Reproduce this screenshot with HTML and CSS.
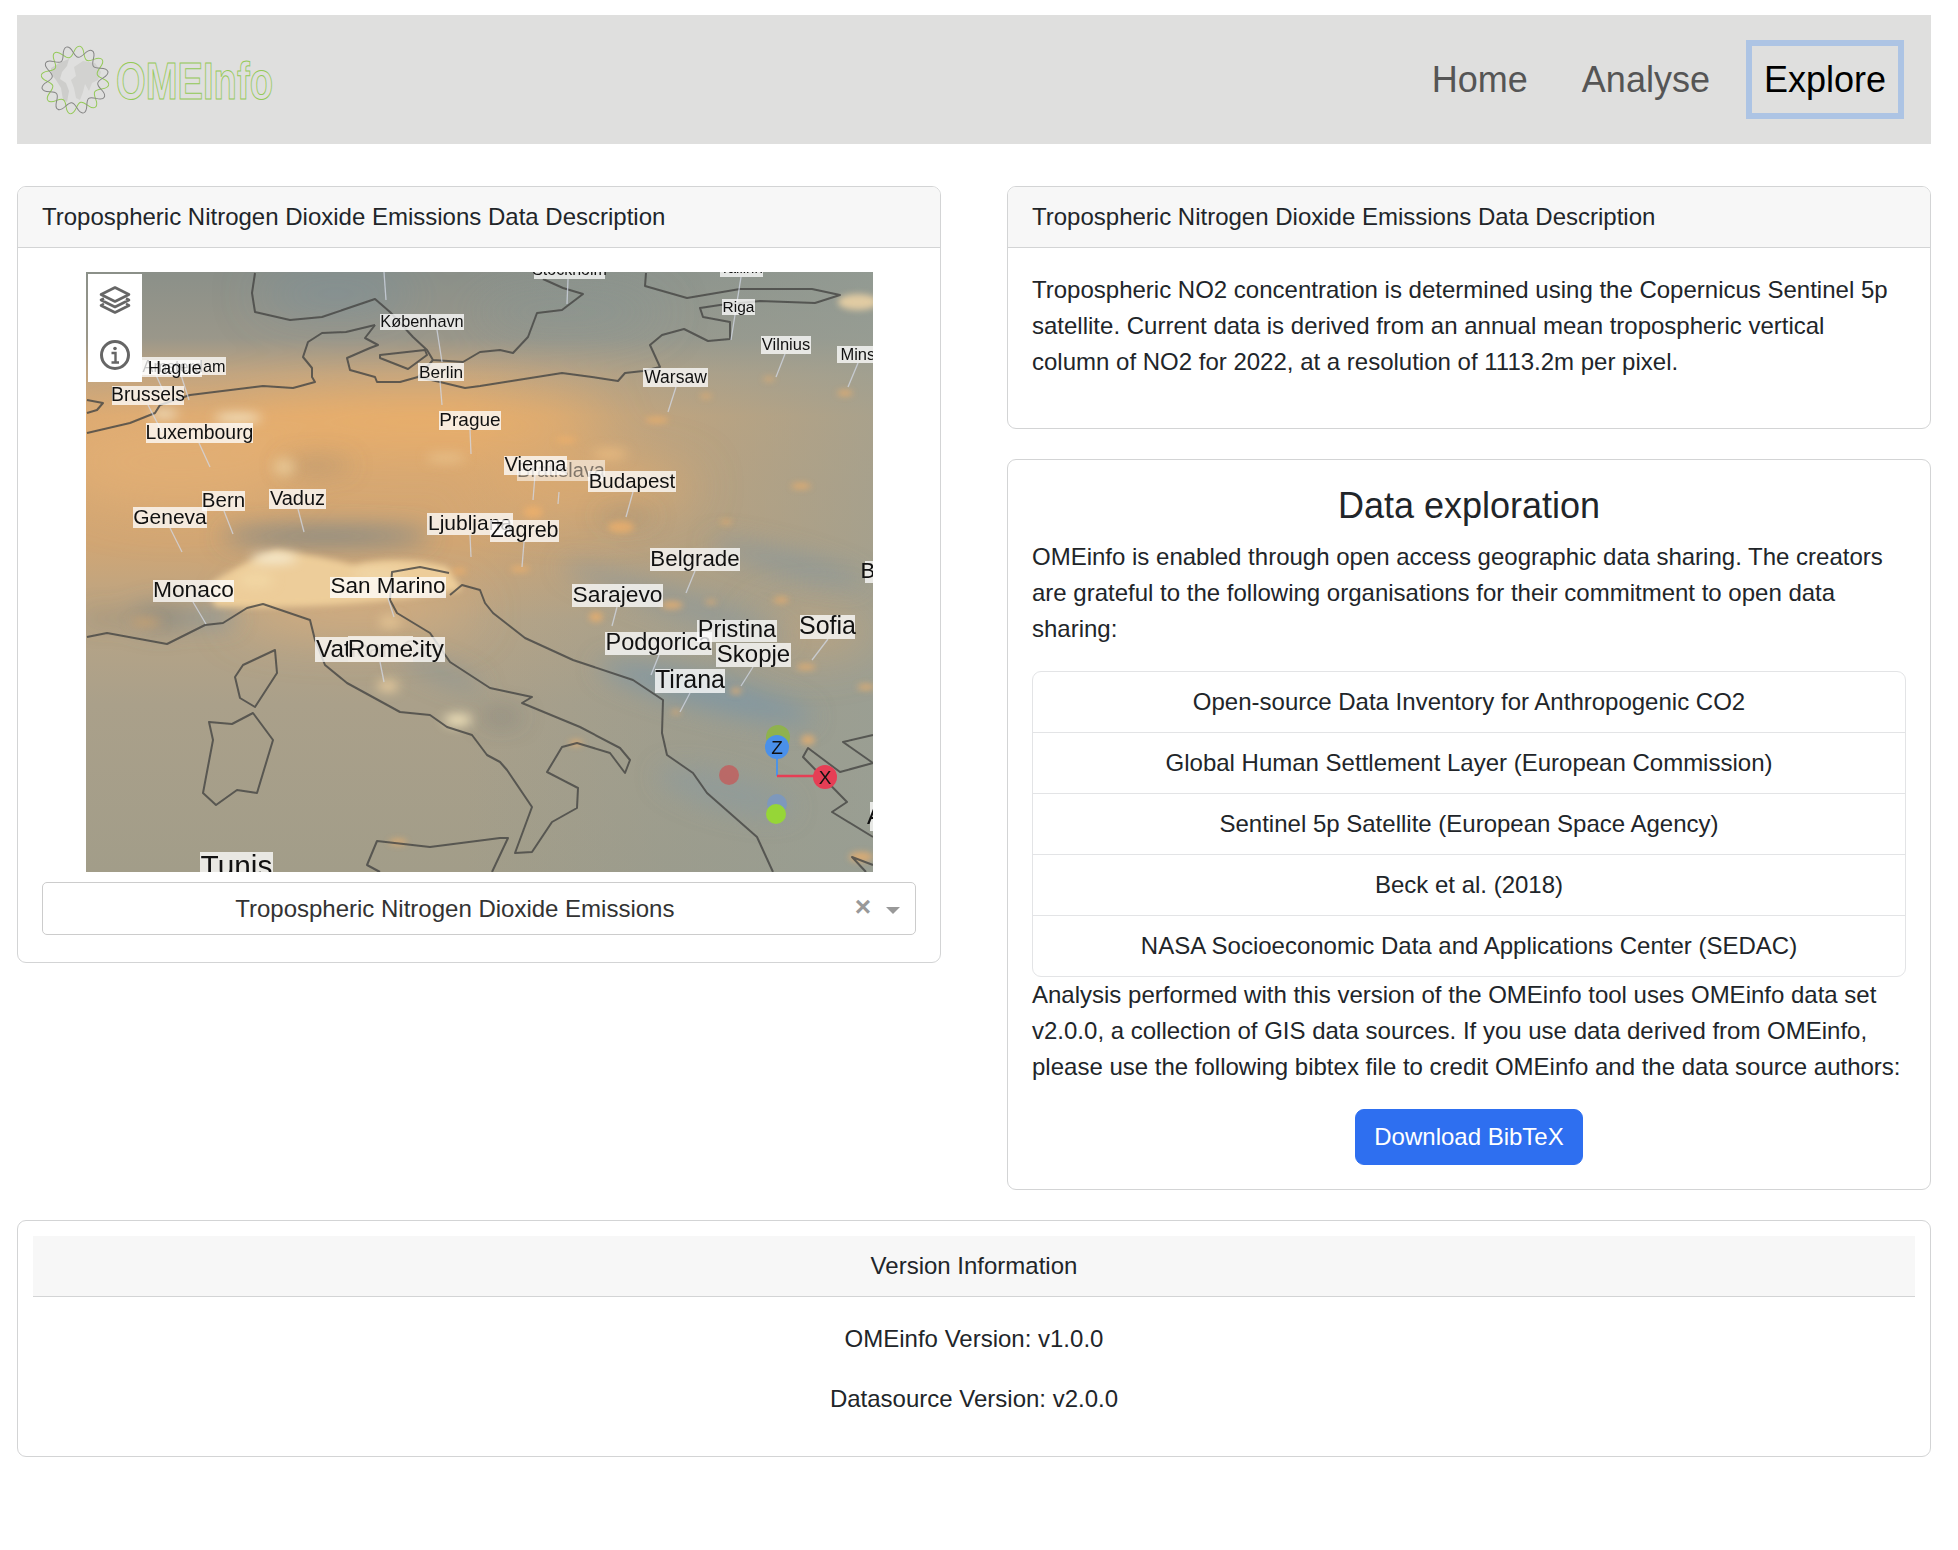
FILE: index.html
```html
<!DOCTYPE html>
<html lang="en">
<head>
<meta charset="utf-8">
<title>OMEInfo - Explore</title>
<link rel="stylesheet" href="styles.css">
</head>
<body>
<div class="page">
  <header class="navbar">
    <a class="brand" href="#" aria-label="OMEInfo">
      <svg class="logo" width="246" height="80" viewBox="0 0 246 80">
        <defs>
          <path id="wa" d="M34 0C34 6 23.100 4.200 21.200 8.800C19.300 13.400 28.200 19.800 24 24"/>
          <g id="ring"><use href="#wa"/><use href="#wa" transform="rotate(45)"/><use href="#wa" transform="rotate(90)"/><use href="#wa" transform="rotate(135)"/><use href="#wa" transform="rotate(180)"/><use href="#wa" transform="rotate(225)"/><use href="#wa" transform="rotate(270)"/><use href="#wa" transform="rotate(315)"/></g>
        </defs>
        <g transform="translate(40 40)">
          <path fill="#cdcdcb" d="M-24-12L-14-18L-6-21L-8-14L-13-8L-15-1L-9 3L-6 11L-8 22L-12 20L-14 8L-19 0L-24-6Z"/>
          <path fill="#d2d2d0" d="M-1-13L8-19L20-17L26-8L23 0L17 3L14 11L10 4L8 12L5 20L1 18L-1 8L-4 0L1-4Z"/>
          <g fill="none" stroke-width="1">
            <g stroke="#94c957" transform="rotate(8)"><use href="#ring"/></g>
            <g stroke="#858585" transform="rotate(30.500)"><use href="#ring"/></g>
          </g>
        </g>
        <text class="logo-text" x="81" y="59" textLength="157" lengthAdjust="spacingAndGlyphs">OMEInfo</text>
      </svg>
    </a>
    <nav class="nav-links">
      <a class="nav-link" href="#">Home</a>
      <a class="nav-link" href="#">Analyse</a>
      <a class="nav-link nav-link-active" href="#">Explore</a>
    </nav>
  </header>

  <main class="columns">
    <section class="card">
      <div class="card-header">Tropospheric Nitrogen Dioxide Emissions Data Description</div>
      <div class="card-body map-body">
        <div class="map">
          <svg class="map-canvas" width="787" height="600" viewBox="0 0 787 600">
            <defs>
              <linearGradient id="base" x1="0" y1="0" x2="0" y2="1">
                <stop offset="0" stop-color="#8b9089"/>
                <stop offset=".11" stop-color="#9a978a"/>
                <stop offset=".17" stop-color="#c1a581"/>
                <stop offset=".24" stop-color="#dcaa72"/>
                <stop offset=".45" stop-color="#d1a674"/>
                <stop offset=".58" stop-color="#b7a486"/>
                <stop offset=".72" stop-color="#aaa08a"/>
                <stop offset="1" stop-color="#a29d89"/>
              </linearGradient>
              <linearGradient id="east" x1="0" y1="0" x2="1" y2="0">
                <stop offset="0" stop-color="#929b93" stop-opacity="0"/>
                <stop offset=".5" stop-color="#929b93" stop-opacity=".42"/>
                <stop offset="1" stop-color="#959e96" stop-opacity=".72"/>
              </linearGradient>
              <filter id="b1" x="-40%" y="-40%" width="180%" height="180%"><feGaussianBlur stdDeviation="1.200"/></filter>
              <filter id="b3" x="-60%" y="-80%" width="220%" height="260%"><feGaussianBlur stdDeviation="3"/></filter>
              <filter id="b6" x="-40%" y="-60%" width="180%" height="220%"><feGaussianBlur stdDeviation="6"/></filter>
              <filter id="b12" x="-40%" y="-80%" width="180%" height="260%"><feGaussianBlur stdDeviation="12"/></filter>
              <filter id="b24" x="-50%" y="-100%" width="200%" height="300%"><feGaussianBlur stdDeviation="24"/></filter>
              <filter id="line"><feGaussianBlur stdDeviation=".7"/></filter>
            </defs>
            <rect width="787" height="600" fill="url(#base)"/>
            <rect x="380" y="-20" width="407" height="640" fill="url(#east)"/>
            <g filter="url(#b24)">
              <ellipse cx="250" cy="22" rx="80" ry="12" fill="#6d8fa6" opacity=".65"/>
              <ellipse cx="480" cy="40" rx="100" ry="20" fill="#7a9199" opacity=".35"/>
              <ellipse cx="330" cy="150" rx="190" ry="28" fill="#eeb06a" opacity=".7"/>
              <ellipse cx="90" cy="190" rx="120" ry="46" fill="#eab274" opacity=".55"/>
              <ellipse cx="500" cy="215" rx="110" ry="24" fill="#e6ad6c" opacity=".7"/>
              <ellipse cx="270" cy="340" rx="120" ry="18" fill="#e8b47a" opacity=".7"/>
              <ellipse cx="730" cy="360" rx="60" ry="22" fill="#dca76d" opacity=".5"/>
            </g>
            <g filter="url(#b12)">
              <ellipse cx="620" cy="420" rx="110" ry="16" fill="#7593ab" opacity=".65" transform="rotate(14 620 420)"/>
              <ellipse cx="590" cy="330" rx="120" ry="12" fill="#83959f" opacity=".55" transform="rotate(18 590 330)"/>
              <ellipse cx="700" cy="290" rx="80" ry="10" fill="#7a92a2" opacity=".55" transform="rotate(15 700 290)"/>
              <ellipse cx="640" cy="520" rx="70" ry="18" fill="#8498a4" opacity=".45" transform="rotate(15 640 520)"/>
              <ellipse cx="240" cy="264" rx="105" ry="7" fill="#54788f" opacity=".9"/>
              <ellipse cx="75" cy="345" rx="32" ry="12" fill="#5f7480" opacity=".5"/>
              <ellipse cx="125" cy="345" rx="24" ry="7" fill="#6a8ca4" opacity=".75"/>
              <ellipse cx="355" cy="400" rx="46" ry="7" fill="#6f8d9f" opacity=".55" transform="rotate(22 355 400)"/>
              <ellipse cx="415" cy="445" rx="22" ry="5" fill="#565f68" opacity=".5"/>
              <ellipse cx="230" cy="193" rx="36" ry="6" fill="#8a7e6e" opacity=".45"/>
              <ellipse cx="540" cy="244" rx="30" ry="4" fill="#66706e" opacity=".5"/>
              <ellipse cx="20" cy="346" rx="26" ry="4" fill="#6a6659" opacity=".45"/>
            </g>
            <path filter="url(#b3)" fill="#edcd9a" d="M118 316Q155 290 190 278Q235 284 268 293Q315 282 362 295L376 318Q260 338 130 335Z"/>
            <g filter="url(#b6)">
              <ellipse cx="188" cy="286" rx="24" ry="4" fill="#f8f5e2"/>
              <ellipse cx="292" cy="302" rx="26" ry="4" fill="#f4dfb3" opacity=".8"/>
              <ellipse cx="170" cy="308" rx="18" ry="8" fill="#f5dba9" opacity=".65"/>
              <ellipse cx="152" cy="146" rx="24" ry="4" fill="#f5ecd0"/>
              <ellipse cx="198" cy="195" rx="11" ry="9" fill="#f0d8a8" opacity=".6"/>
              <ellipse cx="78" cy="142" rx="14" ry="4" fill="#f5efd8" opacity=".85"/>
              <ellipse cx="360" cy="186" rx="20" ry="5" fill="#efcd98" opacity=".6"/>
              <ellipse cx="524" cy="182" rx="18" ry="5" fill="#f0bf82" opacity=".8"/>
              <ellipse cx="372" cy="448" rx="14" ry="5" fill="#fff0c4"/>
              <ellipse cx="302" cy="414" rx="11" ry="5" fill="#f9d9a4" opacity=".9"/>
              <ellipse cx="304" cy="350" rx="11" ry="5" fill="#f5d5a0" opacity=".75"/>
              <ellipse cx="60" cy="350" rx="16" ry="3" fill="#eeab62" opacity=".8"/>
            </g>
            <g filter="url(#b3)" fill="#f0b06a" opacity=".75">
              <ellipse cx="772" cy="30" rx="20" ry="8" fill="#fbdca8"/><ellipse cx="571" cy="148" rx="12" ry="3"/>
              <ellipse cx="480" cy="168" rx="11" ry="3"/>
              <ellipse cx="447" cy="240" rx="10" ry="6"/><ellipse cx="535" cy="255" rx="13" ry="6"/>
              <ellipse cx="434" cy="297" rx="10" ry="3"/><ellipse cx="373" cy="299" rx="8" ry="3"/>
              <ellipse cx="683" cy="107" rx="6" ry="2"/><ellipse cx="759" cy="121" rx="8" ry="3"/><ellipse cx="620" cy="124" rx="6" ry="2"/>
              <ellipse cx="586" cy="333" rx="11" ry="4"/><ellipse cx="625" cy="330" rx="6" ry="2"/>
              <ellipse cx="695" cy="328" rx="8" ry="3"/><ellipse cx="510" cy="345" rx="7" ry="5"/>
              <ellipse cx="720" cy="395" rx="10" ry="3"/><ellipse cx="650" cy="419" rx="6" ry="3"/>
              <ellipse cx="590" cy="440" rx="5" ry="2"/><ellipse cx="722" cy="468" rx="7" ry="5"/>
              <ellipse cx="490" cy="471" rx="7" ry="3"/><ellipse cx="312" cy="570" rx="9" ry="3"/>
              <ellipse cx="775" cy="585" rx="12" ry="5"/><ellipse cx="780" cy="415" rx="9" ry="3"/>
              <ellipse cx="715" cy="214" rx="10" ry="3"/><ellipse cx="640" cy="250" rx="6" ry="2"/>
            </g>
            <g fill="none" stroke="#474745" stroke-width="2" stroke-linejoin="round" opacity=".82" filter="url(#line)">
              <path d="M169 1L166 21L169 40L204 48L236 45L289 27L304 40L327 65L341 78L347 88L377 90L394 80L414 78L427 81L442 65L451 41L476 38L497 22L477 16L457 7"/>
              <path d="M289 53L260 60L236 61L222 70L217 85L226 96L226 105L229 110L207 116L177 114L104 123L74 133L69 141L44 151L1 161"/>
              <path d="M289 53L279 66L292 73L284 76L261 86L264 98L289 105L291 110L314 110L332 105L347 88"/>
              <path d="M294 83L339 78L341 83L322 97L294 86Z"/>
              <path d="M332 105L354 110L379 116L394 114L476 101L506 105L532 109L539 101L557 99L574 95L564 73L576 63L598 57L622 69L644 67L644 50L617 45L614 36L634 33L674 29L729 31L754 23L726 17L654 17L601 26L559 14L560 1"/>
              <path d="M1 128L17 131L11 138L1 141"/>
              <path d="M1 365L21 361L81 372L119 353L137 351L161 336L177 332L224 348L229 368L239 393L261 411L314 440L344 443L361 455L386 463L401 483L414 490L421 498L446 535L429 581L446 580L466 550L491 536L492 516L461 500L476 475L491 471L524 481L539 501L544 488L534 476L494 455L436 431L446 425L404 416L364 390L344 361L311 341L304 328L306 300L334 295L363 301"/>
              <path d="M364 323L376 313L394 318L399 331L407 341L439 366L487 388L547 408L577 428L576 461L581 483L607 501L621 521L671 565L687 600"/>
              <path d="M189 378L191 401L169 435L154 426L149 405L157 393Z"/>
              <path d="M167 441L187 468L171 521L151 518L130 533L117 521L127 468L123 450L146 452Z"/>
              <path d="M294 600L281 593L291 569L344 575L414 566L422 566L406 600"/>
              <path d="M787 463L757 470L787 491L754 500L722 476L717 485L761 530L746 540L787 565"/>
              <path d="M787 593L766 585L780 600"/>
            </g>
            <g stroke="#d3d9e6" stroke-width="1.300" opacity=".75">
              <path d="M298 0L300 28"/><path d="M351 58L356 90"/><path d="M354 109L356 133"/><path d="M384 158L385 182"/>
              <path d="M482 7L481 32"/><path d="M655 5L645 68"/><path d="M699 82L690 105"/><path d="M772 91L762 115"/><path d="M590 115L582 140"/>
              <path d="M70 103L80 125"/><path d="M94 100L103 128"/><path d="M62 133L76 160"/><path d="M113 171L124 195"/><path d="M138 239L147 262"/><path d="M212 237L218 260"/><path d="M84 256L96 280"/>
              <path d="M107 330L120 352"/><path d="M302 326L308 345"/><path d="M384 263L385 285"/><path d="M449 203L447 228"/><path d="M473 220L472 232"/><path d="M547 220L540 245"/><path d="M438 270L436 295"/><path d="M609 299L600 321"/>
              <path d="M531 335L526 354"/><path d="M573 383L565 403"/><path d="M667 395L655 414"/><path d="M742 367L726 388"/><path d="M604 421L594 440"/><path d="M294 390L298 410"/>
            </g>
            <g class="labels">
              <rect x="448" y="-14" width="71" height="21"/><text x="483.500" y="3" font-size="16">Stockholm</text>
              <rect x="634" y="-12" width="43" height="17"/><text x="655.500" y="1" font-size="15">Tallinn</text>
              <rect x="294" y="42" width="84" height="16"/><text x="336" y="55" font-size="16.300">København</text>
              <rect x="636" y="27" width="33" height="16"/><text x="652.500" y="40" font-size="15.500">Riga</text>
              <rect x="675" y="64" width="50" height="18"/><text x="700" y="78" font-size="16.500">Vilnius</text>
              <rect x="751" y="74" width="50" height="17"/><text x="776" y="88" font-size="16.500">Minsk</text>
              <rect x="332" y="91" width="46" height="18"/><text x="355" y="105.500" font-size="17.300">Berlin</text>
              <rect x="557" y="96" width="65" height="19"/><text x="589.500" y="111" font-size="17.500">Warsaw</text>
              <rect x="56" y="85" width="84" height="18"/><text x="98" y="100" font-size="16.200">Amsterdam</text>
              <rect x="25" y="88" width="91" height="17"/><text x="70.500" y="102" font-size="18.300">The Hague</text>
              <rect x="26" y="114" width="72" height="19"/><text x="62" y="129" font-size="19.300">Brussels</text>
              <rect x="60" y="151" width="107" height="20"/><text x="113.500" y="167" font-size="19.400">Luxembourg</text>
              <rect x="353" y="139" width="62" height="19"/><text x="384" y="154" font-size="19">Prague</text>
              <rect x="116" y="219" width="43" height="20"/><text x="137.500" y="235" font-size="20.500">Bern</text>
              <rect x="183" y="217" width="57" height="20"/><text x="211.500" y="233" font-size="20">Vaduz</text>
              <rect x="47" y="235" width="74" height="21"/><text x="84" y="252" font-size="21">Geneva</text>
              <rect class="faded" x="431" y="188" width="88" height="21"/><text class="faded-text" x="475" y="205" font-size="20">Bratislava</text>
              <rect x="418" y="184" width="63" height="19"/><text x="449.500" y="199" font-size="20">Vienna</text>
              <rect x="502" y="199" width="88" height="21"/><text x="546" y="216" font-size="20.500">Budapest</text>
              <rect x="341" y="241" width="86" height="22"/><text x="384" y="258" font-size="21">Ljubljana</text>
              <rect x="404" y="248" width="69" height="22"/><text x="438.500" y="265" font-size="21.500">Zagreb</text>
              <rect x="564" y="276" width="90" height="23"/><text x="609" y="294" font-size="22.300">Belgrade</text>
              <rect x="779" y="289" width="90" height="22"/><text x="824" y="306" font-size="22">Bucharest</text>
              <rect x="67" y="308" width="81" height="22"/><text x="107.500" y="325" font-size="22.800">Monaco</text>
              <rect x="244" y="305" width="116" height="21"/><text x="302" y="321" font-size="22.500">San Marino</text>
              <rect x="486" y="312" width="91" height="23"/><text x="531.500" y="330" font-size="22.800">Sarajevo</text>
              <rect x="229" y="365" width="130" height="25"/><text x="294" y="385" font-size="24.300">Vatican City</text>
              <rect class="solid" x="262" y="364" width="65" height="26"/><text x="294.500" y="385" font-size="24.500">Rome</text>
              <rect x="519" y="360" width="107" height="23"/><text x="572.500" y="378" font-size="23.500">Podgorica</text>
              <rect x="611" y="348" width="80" height="22"/><text x="651" y="365" font-size="23.500">Pristina</text>
              <rect x="714" y="343" width="55" height="24"/><text x="741.500" y="362" font-size="25">Sofia</text>
              <rect x="630" y="371" width="75" height="24"/><text x="667.500" y="390" font-size="24">Skopje</text>
              <rect x="569" y="397" width="70" height="24"/><text x="604" y="416" font-size="25">Tirana</text>
              <rect x="114" y="580" width="73" height="24"/><text x="150.500" y="604" font-size="29.800">Tunis</text>
              <rect x="784" y="530" width="70" height="29"/><text x="820" y="552" font-size="25">Athens</text>
            </g>
            <g class="gizmo">
              <circle cx="643" cy="503" r="10" fill="#c0605f" opacity=".85"/>
              <circle cx="691" cy="532" r="10" fill="#7b98c0" opacity=".9"/>
              <circle cx="692" cy="465" r="12" fill="#8fb24e"/>
              <path d="M691 504V475" stroke="#4c93e6" stroke-width="2"/>
              <path d="M691 504H731" stroke="#e63e55" stroke-width="2.500"/>
              <circle cx="691" cy="475" r="12" fill="#4a90ea"/>
              <circle cx="739" cy="505" r="12" fill="#e63e55"/>
              <circle cx="690" cy="542" r="10" fill="#96d637"/>
              <text x="691" y="482" font-size="19">Z</text>
              <text x="739" y="512" font-size="19">X</text>
            </g>
          </svg>
          <div class="map-tools">
            <svg class="tool-icon" width="32" height="28" viewBox="0 0 32 28" fill="none" stroke="#666" stroke-width="2.600" stroke-linejoin="round">
              <path d="M16 1.500L30 8.500L16 15.500L2 8.500Z"/>
              <path d="M5 12.500L2 14L16 21L30 14L27 12.500"/>
              <path d="M5 18L2 19.500L16 26.500L30 19.500L27 18"/>
            </svg>
            <svg class="tool-icon" width="32" height="32" viewBox="0 0 32 32" fill="none" stroke="#666">
              <circle cx="16" cy="16" r="13.500" stroke-width="3"/>
              <circle cx="16" cy="9.500" r="1.800" fill="#666" stroke="none"/>
              <path d="M12.500 14H16.500V23M12.500 23.500H20" stroke-width="2.400"/>
            </svg>
          </div>
        </div>
        <div class="select">
          <span class="select-value">Tropospheric Nitrogen Dioxide Emissions</span>
          <span class="select-clear">×</span>
          <span class="select-arrow"></span>
        </div>
      </div>
    </section>

    <div class="right-column">
      <section class="card">
        <div class="card-header">Tropospheric Nitrogen Dioxide Emissions Data Description</div>
        <div class="card-body">
          <p>Tropospheric NO2 concentration is determined using the Copernicus Sentinel 5p satellite. Current data is derived from an annual mean tropospheric vertical column of NO2 for 2022, at a resolution of 1113.2m per pixel.</p>
        </div>
      </section>
      <section class="card">
        <div class="card-body">
          <h4 class="card-title">Data exploration</h4>
          <p>OMEinfo is enabled through open access geographic data sharing. The creators are grateful to the following organisations for their commitment to open data sharing:</p>
          <ul class="list">
            <li>Open-source Data Inventory for Anthropogenic CO2</li>
            <li>Global Human Settlement Layer (European Commission)</li>
            <li>Sentinel 5p Satellite (European Space Agency)</li>
            <li>Beck et al. (2018)</li>
            <li>NASA Socioeconomic Data and Applications Center (SEDAC)</li>
          </ul>
          <p>Analysis performed with this version of the OMEinfo tool uses OMEinfo data set v2.0.0, a collection of GIS data sources. If you use data derived from OMEinfo, please use the following bibtex file to credit OMEinfo and the data source authors:</p>
          <div class="button-row"><a class="button" href="#">Download BibTeX</a></div>
        </div>
      </section>
    </div>
  </main>

  <section class="card version-card">
    <div class="card-header version-header">Version Information</div>
    <div class="card-body version-body">
      <p>OMEinfo Version: v1.0.0</p>
      <p>Datasource Version: v2.0.0</p>
    </div>
  </section>
</div>
</body>
</html>
```
FILE: styles.css
```css
* { box-sizing: border-box; }
html, body { margin: 0; padding: 0; background: #fff; }
body {
  font-family: "Liberation Sans", Arial, sans-serif;
  font-size: 24px;
  line-height: 36px;
  color: #212529;
}
.page {
  width: 1914px;
  margin: 15px 0 0 17px;
  display: flex;
  flex-direction: column;
  gap: 30px;
  padding-bottom: 94px;
}
.navbar {
  height: 129px;
  background: #dfdfde;
  display: flex;
  align-items: center;
  justify-content: space-between;
  padding: 0 27px 0 0;
  margin-bottom: 12px;
}
.brand { display: block; height: 80px; margin-left: 18px; }
.logo { display: block; }
.logo-text {
  font-family: "Liberation Sans Narrow", "Liberation Sans", sans-serif;
  font-size: 51px;
  font-weight: 700;
  fill: none;
  stroke: #94c957;
  stroke-width: 1px;
}
.nav-links { display: flex; gap: 18px; }
.nav-link {
  display: block;
  font-size: 36px;
  line-height: 53px;
  padding: 7px 12px;
  border: 6px solid transparent;
  color: #555;
  text-decoration: none;
}
.nav-link-active { color: #000; border-color: #adc4e4; }

.columns {
  display: grid;
  grid-template-columns: 924px 924px;
  column-gap: 66px;
  align-items: start;
}
.right-column { display: flex; flex-direction: column; gap: 30px; }
.card {
  border: 1px solid #d3d4d5;
  border-radius: 9px;
  background: #fff;
}
.card-header {
  padding: 12px 24px;
  background: #f7f7f7;
  border-bottom: 1px solid #d3d4d5;
  border-radius: 8px 8px 0 0;
}
.card-body { padding: 24px; }
p { margin: 0 0 24px; }
.card-title {
  margin: 0 0 12px;
  font-size: 36px;
  line-height: 43px;
  font-weight: 400;
  text-align: center;
}

.map-body { padding-bottom: 27px; }
.map {
  position: relative;
  width: 787px;
  height: 600px;
  margin: 0 auto;
  overflow: hidden;
}
.map-canvas { display: block; }
.labels rect { fill: #fff; fill-opacity: .76; }
.labels rect.faded { fill-opacity: .55; }
.labels rect.solid { fill: #f1ece4; fill-opacity: .93; }
.labels text {
  fill: #111;
  text-anchor: middle;
  font-family: "Liberation Sans", Arial, sans-serif;
}
.labels text.faded-text { fill-opacity: .5; }
.gizmo text {
  fill: #111;
  text-anchor: middle;
  font-family: "Liberation Sans", Arial, sans-serif;
}
.map-tools {
  position: absolute;
  left: 2px;
  top: 2px;
  width: 54px;
  height: 108px;
  background: #fff;
  display: flex;
  flex-direction: column;
  align-items: center;
  justify-content: space-between;
  padding: 12px 0 11px;
}
.tool-icon { display: block; }

.select {
  margin-top: 10px;
  height: 53px;
  border: 1px solid #ccc;
  border-radius: 5px;
  display: flex;
  align-items: center;
  color: #333;
  padding: 0 15px 0 12px;
}
.select-value { flex: 1; text-align: center; }
.select-clear {
  font-size: 28px;
  line-height: 26px;
  font-weight: 700;
  color: #999;
  margin: -4px 15px 0 0;
}
.select-arrow {
  width: 0;
  height: 0;
  border-style: solid;
  border-width: 7px 7px 0;
  border-color: #999 transparent transparent;
  margin-top: 4px;
}

.list {
  list-style: none;
  margin: 0;
  padding: 0;
  border: 1px solid #e3e4e6;
  border-radius: 9px;
  text-align: center;
}
.list li { padding: 12px 24px; border-bottom: 1px solid #e3e4e6; height: 61px; }
.list li:last-child { border-bottom: 0; height: 60px; }
.button-row { text-align: center; }
.button {
  display: inline-block;
  padding: 9px 18px;
  border: 1px solid #2e6ff0;
  border-radius: 9px;
  background: #2e6ff0;
  color: #fff;
  text-decoration: none;
  vertical-align: top;
}

.version-card { padding: 15px 15px 15px; text-align: center; }
.version-header { border-radius: 0; }
.version-body { padding: 24px 24px 0; }
```
